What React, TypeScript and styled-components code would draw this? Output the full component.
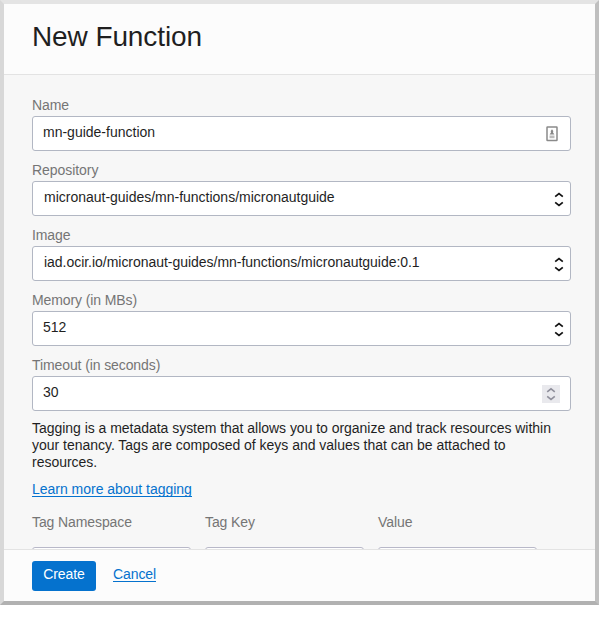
import React from "react";
import styled, { createGlobalStyle } from "styled-components";

const GlobalStyle = createGlobalStyle`
  * { box-sizing: border-box; }
  body { margin: 0; background: #fff; font-family: "Liberation Sans", Arial, sans-serif; }
`;

const Dialog = styled.section`
  display: flex;
  flex-direction: column;
  width: 599px;
  height: 605px;
  border: 4px solid;
  border-color: #e4e4e4 #bfbfbf #b1b1b1 #d8d8d8;
  background: #f7f7f7;
  color: #1f1f1f;
  font-size: 14px;
  line-height: 17px;
`;

const Header = styled.header`
  height: 71px;
  flex: none;
  padding: 16px 28px 0;
  background: #fcfcfc;
  border-bottom: 1px solid #e3e3e3;
`;

const Title = styled.h1`
  margin: 0;
  font-size: 28px;
  font-weight: 400;
  line-height: 34px;
  letter-spacing: -0.1px;
`;

const Body = styled.div`
  flex: 1;
  min-height: 0;
  overflow: hidden;
  padding: 22px 24px 0 28px;
`;

const Field = styled.div`
  height: 65px;
`;

const Label = styled.label<{ $spacing?: number }>`
  display: block;
  height: 19px;
  color: #757575;
  white-space: nowrap;
  letter-spacing: ${(p) => p.$spacing ?? -0.1}px;
`;

const Control = styled.div<{ $end: number; $start?: number }>`
  display: flex;
  align-items: center;
  justify-content: space-between;
  width: 539px;
  height: 35px;
  padding: 0 ${(p) => p.$end}px 0 ${(p) => p.$start ?? 10}px;
  border: 1px solid #b2b7c3;
  border-radius: 3px;
  background: #fff;

  > svg {
    margin-top: 1px;
  }
`;

const Value = styled.span<{ $spacing?: number }>`
  padding-bottom: 2px;
  white-space: nowrap;
  letter-spacing: ${(p) => p.$spacing ?? 0}px;
`;

const Spinner = styled.span`
  display: flex;
  align-items: center;
  justify-content: center;
  width: 18px;
  height: 18px;
  margin-top: 1px;
  background: #e9e9ed;
`;

const Description = styled.p`
  margin: -2px 0 10px;
`;

const Line = styled.span<{ $spacing: number }>`
  display: block;
  white-space: nowrap;
  letter-spacing: ${(p) => p.$spacing}px;
`;

const Link = styled.a<{ $spacing?: number }>`
  display: inline-block;
  height: 16px;
  color: #0572ce;
  border-bottom: 1px solid #0572ce;
  white-space: nowrap;
  letter-spacing: ${(p) => p.$spacing ?? 0}px;
`;

const Tags = styled.div`
  display: grid;
  grid-template-columns: repeat(3, 159px);
  column-gap: 14px;
  margin-top: 16px;
`;

const TagInput = styled.div`
  height: 35px;
  margin-top: 14px;
  border: 1px solid #b8b8c8;
  border-radius: 3px;
  background: #fff;
`;

const Footer = styled.footer`
  display: flex;
  align-items: flex-start;
  gap: 17px;
  height: 52px;
  flex: none;
  padding: 11px 28px 0;
  background: #fcfcfc;
  border-top: 1px solid #e3e3e3;
`;

const CreateButton = styled.button`
  width: 64px;
  height: 30px;
  padding: 0 0 3px;
  border: 0;
  border-radius: 3px;
  background: #0572ce;
  color: #fff;
  font: inherit;
  letter-spacing: -0.1px;
`;

const CancelSlot = styled.div`
  padding-top: 5px;
`;

const Arrows = () => (
  <svg width="10" height="18" viewBox="0 0 10 18" fill="none" stroke="#111" strokeWidth="1.7">
    <path d="M1.2 6.7 5 3.5l3.8 3.2M1.2 12.3 5 15.5l3.8-3.2" />
  </svg>
);

const SmallArrows = () => (
  <svg width="10" height="14" viewBox="0 0 10 14" fill="none" stroke="#8f8f9b" strokeWidth="1.6">
    <path d="M1.2 4.8 5 1.8l3.8 3M1.2 9.4 5 12.4l3.8-3" />
  </svg>
);

const CredentialIcon = () => (
  <svg width="12" height="16" viewBox="0 0 12 16">
    <rect x="1" y="1" width="10" height="13.5" rx=".5" fill="#fff" stroke="#8a8a8a" strokeWidth="1.5" />
    <path d="M6 3.2 7.3 5 7 6.6 8.4 8.5H3.6L5 6.6 4.7 5Z" fill="#888" />
    <path d="M3.5 9.5h5v2.7h-5z" fill="#bcbcbc" />
  </svg>
);

export default function App() {
  return (
    <>
      <GlobalStyle />
      <Dialog>
        <Header>
          <Title>New Function</Title>
        </Header>
        <Body>
          <Field>
            <Label>Name</Label>
            <Control $end={12}>
              <Value>mn-guide-function</Value>
              <CredentialIcon />
            </Control>
          </Field>
          <Field>
            <Label $spacing={-0.05}>Repository</Label>
            <Control $end={6} $start={11}>
              <Value $spacing={-0.01}>micronaut-guides/mn-functions/micronautguide</Value>
              <Arrows />
            </Control>
          </Field>
          <Field>
            <Label>Image</Label>
            <Control $end={6} $start={11}>
              <Value $spacing={-0.03}>iad.ocir.io/micronaut-guides/mn-functions/micronautguide:0.1</Value>
              <Arrows />
            </Control>
          </Field>
          <Field>
            <Label>Memory (in MBs)</Label>
            <Control $end={6}>
              <Value>512</Value>
              <Arrows />
            </Control>
          </Field>
          <Field>
            <Label>Timeout (in seconds)</Label>
            <Control $end={10}>
              <Value>30</Value>
              <Spinner>
                <SmallArrows />
              </Spinner>
            </Control>
          </Field>
          <Description>
            <Line $spacing={-0.03}>Tagging is a metadata system that allows you to organize and track resources within</Line>
            <Line $spacing={-0.02}>your tenancy. Tags are composed of keys and values that can be attached to</Line>
            <Line $spacing={-0.02}>resources.</Line>
          </Description>
          <Link $spacing={-0.02}>Learn more about tagging</Link>
          <Tags>
            <div>
              <Label>Tag Namespace</Label>
              <TagInput />
            </div>
            <div>
              <Label>Tag Key</Label>
              <TagInput />
            </div>
            <div>
              <Label $spacing={-0.05}>Value</Label>
              <TagInput />
            </div>
          </Tags>
        </Body>
        <Footer>
          <CreateButton>Create</CreateButton>
          <CancelSlot>
            <Link $spacing={-0.1}>Cancel</Link>
          </CancelSlot>
        </Footer>
      </Dialog>
    </>
  );
}
